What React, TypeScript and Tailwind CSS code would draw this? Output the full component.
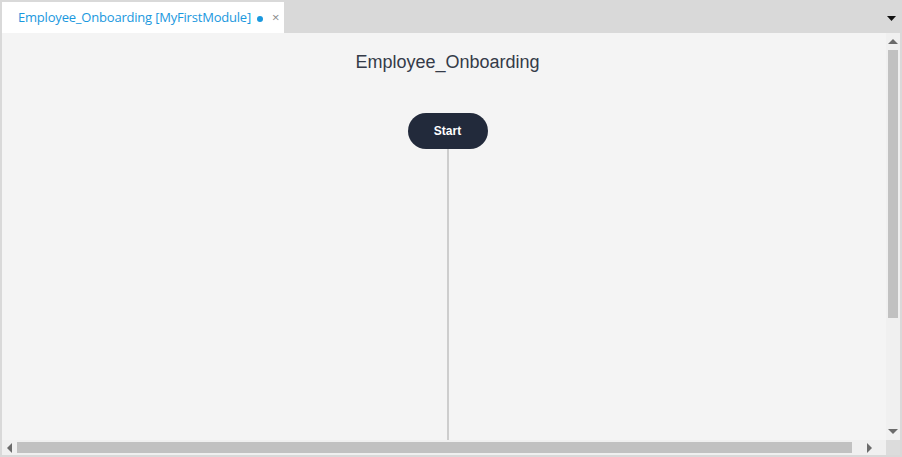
import React from "react";

function Arrow({ dir }: { dir: "up" | "down" | "left" | "right" }) {
  const pts = {
    up: "0,5 5,0 10,5",
    down: "0,0 10,0 5,5",
    left: "5,0 5,10 0,5",
    right: "0,0 0,10 5,5",
  }[dir];
  const vertical = dir === "up" || dir === "down";
  return (
    <svg width={vertical ? 10 : 5} height={vertical ? 5 : 10} viewBox={vertical ? "0 0 10 5" : "0 0 5 10"}>
      <polygon points={pts} fill="#6b6b6b" />
    </svg>
  );
}

export default function App() {
  return (
    <div className="flex h-[457px] w-[902px] flex-col overflow-hidden bg-[#d9d9d9] font-['Liberation_Sans',Arial,sans-serif]">
      {/* tab strip */}
      <div className="flex h-[33px] shrink-0 items-end pl-[2px]">
        <div className="flex h-[31px] w-[282px] items-center whitespace-nowrap bg-white pl-4 font-['Open_Sans','DejaVu_Sans',sans-serif] text-[13px] tracking-[-0.2px] text-[#1a98de]">
          <span>Employee_Onboarding [MyFirstModule]</span>
          <span className="ml-[6px] mt-[2px] h-[6px] w-[6px] rounded-full bg-[#1a98de]" />
          <span className="ml-[9px] text-[13px] leading-none text-[#8a8a8a]">×</span>
        </div>
        <div className="flex-1" />
        <div className="mb-[12px] mr-[6px]">
          <svg width="9" height="5" viewBox="0 0 9 5">
            <polygon points="0,0 9,0 4.5,5" fill="#111" />
          </svg>
        </div>
      </div>

      {/* editor body */}
      <div className="mx-[2px] mb-[2px] flex min-h-0 flex-1 flex-col bg-[#f4f4f4]">
        <div className="flex min-h-0 flex-1">
          <div className="flex flex-1 flex-col items-center pl-[7px]">
            <h1 className="mt-[18px] text-[18px] leading-[22px] text-[#343b48]">Employee_Onboarding</h1>
            <div className="mt-[40px] flex h-[36px] w-[80px] items-center justify-center rounded-full bg-[#222a3b] text-[12px] font-bold text-white">
              Start
            </div>
            <div className="w-[2px] flex-1 bg-[#cdcdcd]" />
          </div>
          {/* vertical scrollbar */}
          <div className="flex w-[14px] flex-col items-center bg-[#f0f0f0]">
            <div className="flex h-[17px] items-center justify-center">
              <Arrow dir="up" />
            </div>
            <div className="h-[268px] w-[10px] bg-[#c1c1c1]" />
            <div className="flex-1" />
            <div className="flex h-[17px] items-center justify-center">
              <Arrow dir="down" />
            </div>
          </div>
        </div>
        {/* horizontal scrollbar */}
        <div className="flex h-[15px] shrink-0">
          <div className="flex flex-1 items-center bg-[#f0f0f0]">
            <div className="flex w-[15px] items-center justify-center">
              <Arrow dir="left" />
            </div>
            <div className="h-[11px] w-[835px] bg-[#c1c1c1]" />
            <div className="flex flex-1 items-center justify-center">
              <Arrow dir="right" />
            </div>
          </div>
          <div className="w-[14px] bg-[#dcdcdc]" />
        </div>
      </div>
    </div>
  );
}
